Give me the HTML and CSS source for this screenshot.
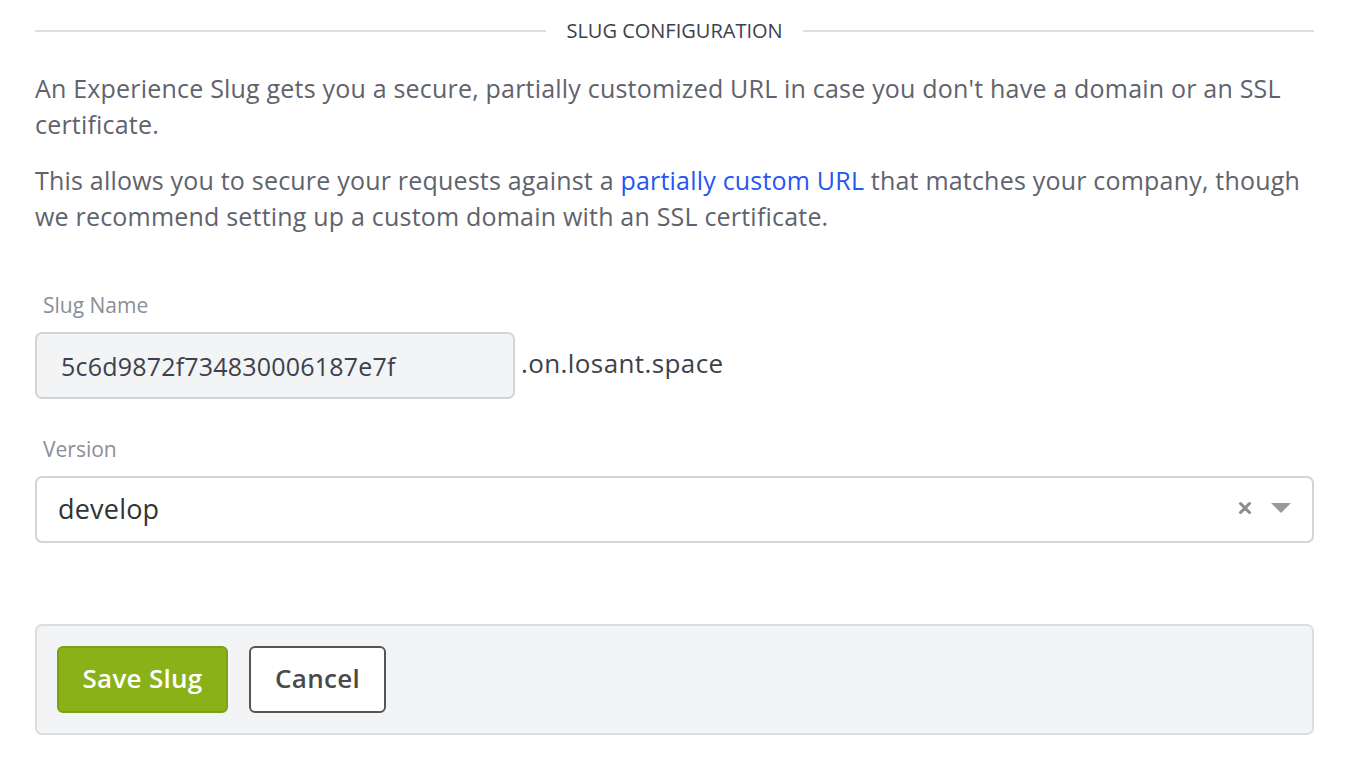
FILE: index.html
```html
<!DOCTYPE html>
<html>
<head>
<meta charset="utf-8">
<link rel="stylesheet" href="styles.css">
</head>
<body>
<div class="page">
  <div class="divider">
    <span class="divider-line"></span>
    <span class="divider-title">SLUG CONFIGURATION</span>
    <span class="divider-line"></span>
  </div>
  <p class="intro">An Experience Slug gets you a secure, partially customized URL in case you don't have a domain or an SSL certificate.</p>
  <p class="intro second">This allows you to secure your requests against a <a class="link" href="#">partially custom URL</a> that matches your company, though we recommend setting up a custom domain with an SSL certificate.</p>

  <div class="field slug-field">
    <label class="field-label">Slug Name</label>
    <div class="slug-row">
      <div class="slug-input">5c6d9872f734830006187e7f</div>
      <span class="slug-suffix">.on.losant.space</span>
    </div>
  </div>

  <div class="field version-field">
    <label class="field-label">Version</label>
    <div class="select">
      <span class="select-value">develop</span>
      <span class="select-icons">
        <svg class="clear-icon" width="14" height="14" viewBox="0 0 14 14"><path d="M2.5 2.5 L11.5 11.5 M11.5 2.5 L2.5 11.5" stroke="#8c8c8c" stroke-width="3" stroke-linecap="round"/></svg>
        <svg class="arrow-icon" width="20" height="12" viewBox="0 0 20 12"><path d="M0 1 L20 1 L10 11 Z" fill="#9a9a9a"/></svg>
      </span>
    </div>
  </div>

  <div class="actions">
    <button class="btn btn-primary">Save Slug</button>
    <button class="btn btn-default">Cancel</button>
  </div>
</div>
</body>
</html>
```

FILE: styles.css
```css
html, body {
  margin: 0;
  padding: 0;
  background: #ffffff;
}

body {
  font-family: "Open Sans", "Liberation Sans", sans-serif;
  color: #5f636d;
}

.page {
  padding: 16px 35px 0 35px;
  display: flex;
  flex-direction: column;
}

.divider {
  display: flex;
  align-items: center;
  gap: 20px;
  height: 30px;
}

.divider-line {
  flex: 1;
  height: 2px;
  background: #dcdee1;
}

.divider-title {
  font-size: 20px;
  font-weight: 500;
  color: #3c414c;
  line-height: 30px;
}

.intro {
  margin: 24px 0 0 0;
  font-size: 25px;
  letter-spacing: 0.2px;
  line-height: 36px;
  color: #5f636d;
}

.intro.second {
  margin-top: 20px;
}

.link {
  color: #2456f5;
  text-decoration: none;
}

.field {
  display: flex;
  flex-direction: column;
}

.slug-field {
  margin-top: 58px;
}

.version-field {
  margin-top: 37px;
}

.field-label {
  font-size: 21px;
  line-height: 26px;
  color: #8a8e97;
  padding-left: 8px;
  margin-bottom: 14px;
}

.slug-row {
  display: flex;
  align-items: center;
  gap: 6px;
}

.slug-input {
  box-sizing: border-box;
  width: 480px;
  height: 67px;
  background: #f3f4f6;
  border: 2px solid #d3d4d6;
  border-radius: 7px;
  padding-left: 24px;
  display: flex;
  align-items: center;
  font-size: 25px;
  letter-spacing: 0.2px;
  color: #3c414c;
}

.slug-suffix {
  font-size: 26px;
  letter-spacing: 0.4px;
  color: #3c414c;
  margin-top: -6px;
}

.select {
  box-sizing: border-box;
  height: 67px;
  border: 2px solid #d3d4d6;
  border-radius: 7px;
  background: #ffffff;
  display: flex;
  align-items: center;
  justify-content: space-between;
  padding: 0 21px 0 21px;
}

.select-value {
  font-size: 27px;
  letter-spacing: 0.2px;
  color: #333333;
  margin-top: -3px;
}

.select-icons {
  display: flex;
  align-items: center;
  gap: 19px;
  margin-top: -4px;
}

.actions {
  margin-top: 81px;
  box-sizing: border-box;
  height: 111px;
  background: #f3f4f6;
  border: 2px solid #dcdddf;
  border-radius: 7px;
  display: flex;
  align-items: center;
  gap: 21px;
  padding: 0 20px;
}

.btn {
  box-sizing: border-box;
  height: 67px;
  border-radius: 6px;
  font-family: "Open Sans", "Liberation Sans", sans-serif;
  font-size: 26px;
  font-weight: 600;
  letter-spacing: 0.3px;
  cursor: pointer;
  padding: 0 0 4px 0;
}

.btn-primary {
  width: 171px;
  background: #8bb118;
  border: 2px solid #7ca014;
  color: #ffffff;
}

.btn-default {
  width: 137px;
  background: #ffffff;
  border: 2px solid #555555;
  color: #4a4a4a;
}
```
